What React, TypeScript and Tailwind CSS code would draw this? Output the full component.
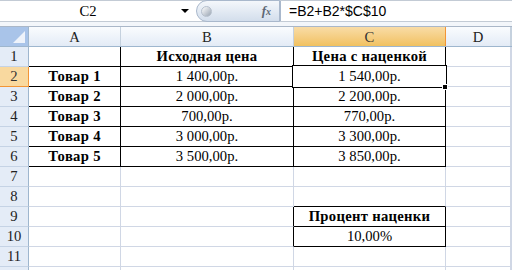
import React from 'react';

const GRID = 'border-[#d0d7e5]';

const widths = ['w-[92px]', 'w-[173px]', 'w-[152px]', 'w-[65px]', 'flex-1'];

type Cell = {
  text?: string;
  bold?: boolean;
  r?: boolean; // black right border
  b?: boolean; // black bottom border
};

const rows: Cell[][] = [
  [{ r: true, b: true }, { text: 'Исходная цена', bold: true, r: true, b: true }, { text: 'Цена с наценкой', bold: true, r: true, b: true }, {}, {}],
  [{ text: 'Товар 1', bold: true, r: true, b: true }, { text: '1 400,00р.', r: true, b: true }, { text: '1 540,00р.', r: true, b: true }, {}, {}],
  [{ text: 'Товар 2', bold: true, r: true, b: true }, { text: '2 000,00р.', r: true, b: true }, { text: '2 200,00р.', r: true, b: true }, {}, {}],
  [{ text: 'Товар 3', bold: true, r: true, b: true }, { text: '700,00р.', r: true, b: true }, { text: '770,00р.', r: true, b: true }, {}, {}],
  [{ text: 'Товар 4', bold: true, r: true, b: true }, { text: '3 000,00р.', r: true, b: true }, { text: '3 300,00р.', r: true, b: true }, {}, {}],
  [{ text: 'Товар 5', bold: true, r: true, b: true }, { text: '3 500,00р.', r: true, b: true }, { text: '3 850,00р.', r: true, b: true }, {}, {}],
  [{}, {}, {}, {}, {}],
  [{}, {}, { b: true }, {}, {}],
  [{}, { r: true }, { text: 'Процент наценки', bold: true, r: true, b: true }, {}, {}],
  [{}, { r: true }, { text: '10,00%', r: true, b: true }, {}, {}],
  [{}, {}, {}, {}, {}],
  [{}, {}, {}, {}, {}],
];

const cols = ['A', 'B', 'C', 'D', ''];

export default function App() {
  return (
    <div className="relative w-[512px] h-[270px] overflow-hidden bg-white" style={{ fontFamily: '"Liberation Serif", "Times New Roman", serif' }}>
      {/* Formula bar */}
      <div className="flex h-[22px] border-t border-b border-[#c3cbd5] bg-white">
        <div className="flex w-[196px] items-center">
          <div className="flex-1 text-center text-[14.67px] text-black pl-[2px]">C2</div>
          <div className="w-[22px] flex justify-center">
            <div className="w-0 h-0 border-l-[4px] border-r-[4px] border-t-[4px] border-l-transparent border-r-transparent border-t-black" />
          </div>
        </div>
        <div className="flex w-[84px] items-center rounded-l-full bg-gradient-to-b from-[#f4f7fb] to-[#d3deec] border border-[#a9b8cc] -my-px">
          <div className="ml-[4px] w-[11px] h-[11px] rounded-full bg-gradient-to-br from-[#ffffff] to-[#9aa5b3] border border-[#b5bfcc]" />
          <div className="flex-1" />
          <div className="mr-[8px] text-[13px] italic font-bold text-[#5d6773]">f<span className="text-[10px]">x</span></div>
        </div>
        <div className="flex-1 flex items-center pl-[8px] text-[14px] text-black border-l border-[#a9b8cc]" style={{ fontFamily: '"Liberation Sans", Arial, sans-serif' }}>
          =B2+B2*$C$10
        </div>
      </div>
      <div className="h-[5px] bg-[#f3f6fa] border-b border-[#aab7c8]" />

      {/* Column headers */}
      <div className="flex h-[20px] border-b border-[#9eb6ce]">
        <div className="relative w-[29px] bg-[#a9c4e9] border-r border-[#9eb6ce]">
          <div className="absolute right-[3px] bottom-[3px] w-0 h-0" style={{ borderBottom: '12px solid #eef3fb', borderLeft: '12px solid transparent' }} />
        </div>
        {cols.map((c, i) => (
          <div
            key={i}
            className={`${widths[i]} flex items-end justify-center text-[14.67px] leading-[18px] ${
              c === 'C'
                ? 'bg-gradient-to-b from-[#f9dca6] to-[#f1c15f] border-r border-[#f29536] text-[#333]'
                : 'bg-gradient-to-b from-[#fafcfe] to-[#e3ebf6] border-r border-[#c5d1de] text-[#222]'
            }`}
          >
            {c}
          </div>
        ))}
      </div>

      {/* Rows */}
      {rows.map((row, ri) => (
        <div key={ri} className="flex h-[20px]">
          <div
            className={`w-[29px] flex items-end justify-center text-[14.67px] leading-[19px] border-r border-b ${
              ri === 1
                ? 'bg-[#f9d99f] border-r-[#f29536] border-b-[#f29536] text-[#333]'
                : 'bg-[#e4ecf7] border-r-[#9eb6ce] border-b-[#c5d3e5] text-[#222]'
            }`}
          >
            {ri < 11 ? ri + 1 : ''}
          </div>
          {row.map((cell, ci) => (
            <div
              key={ci}
              className={`${widths[ci]} flex items-end justify-center text-[14.67px] leading-[19px] text-black whitespace-nowrap border-r border-b ${GRID} ${
                cell.r ? 'border-r-black' : ''
              } ${cell.b ? 'border-b-black' : ''} ${cell.bold ? 'font-bold tracking-[0.3px]' : ''}`}
            >
              {cell.text}
            </div>
          ))}
        </div>
      ))}

      {/* Selection around C2 */}
      <div className="absolute left-[292px] top-[65px] w-[155px] h-[23px] border border-black pointer-events-none">
        <div className="w-full h-full border border-white" />
      </div>
      <div className="absolute left-[442px] top-[84px] w-[6px] h-[6px] bg-black border border-white" />
    </div>
  );
}
